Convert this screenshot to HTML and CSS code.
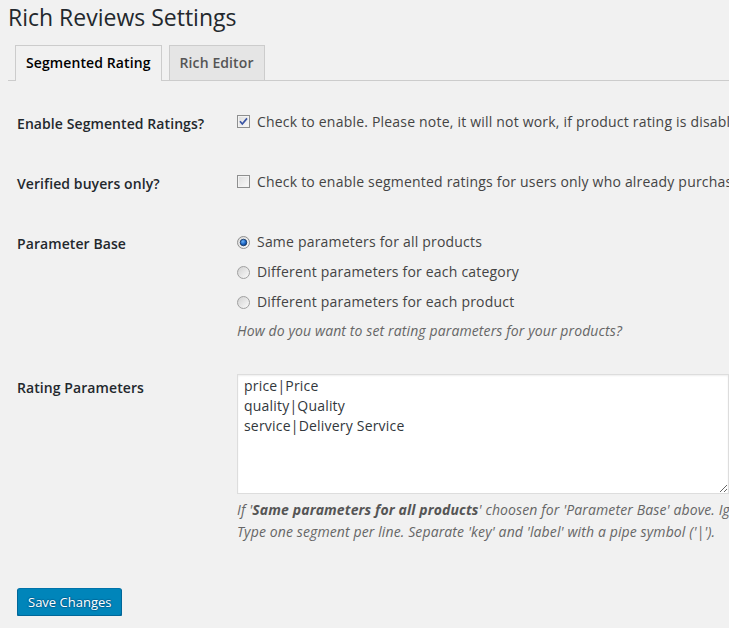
FILE: index.html
```html
<!DOCTYPE html>
<html lang="en">
<head>
<meta charset="utf-8">
<title>Rich Reviews Settings</title>
<link rel="stylesheet" href="styles.css">
</head>
<body>
<div class="wrap">
  <h1 class="page-title">Rich Reviews Settings</h1>
  <nav class="tab-wrapper">
    <a class="tab tab-active">Segmented Rating</a>
    <a class="tab">Rich Editor</a>
  </nav>
  <form class="settings">
    <div class="form-table">
      <div class="row row-1">
        <div class="th">Enable Segmented Ratings?</div>
        <div class="td">
          <label class="check-line">
            <svg class="box" width="13" height="13" viewBox="0 0 13 13">
              <defs><linearGradient id="cg1" x1="0" y1="0" x2="1" y2="1"><stop offset="0" stop-color="#dcdcdc"/><stop offset="1" stop-color="#fbfbfb"/></linearGradient></defs>
              <rect x="0.5" y="0.5" width="12" height="12" fill="url(#cg1)" stroke="#8e8f8f"/>
              <rect x="1.5" y="1.5" width="10" height="10" fill="none" stroke="#f3f3f3"/>
              <path d="M3 6.3 L5.3 9 L10 3.4" fill="none" stroke="#3a55a5" stroke-width="1.7"/>
            </svg>
            <span>Check to enable. Please note, it will not work, if product rating is disabled in WooCommerce settings.</span>
          </label>
        </div>
      </div>
      <div class="row row-2">
        <div class="th">Verified buyers only?</div>
        <div class="td">
          <label class="check-line">
            <svg class="box" width="13" height="13" viewBox="0 0 13 13">
              <defs><linearGradient id="cg2" x1="0" y1="0" x2="1" y2="1"><stop offset="0" stop-color="#dcdcdc"/><stop offset="1" stop-color="#fbfbfb"/></linearGradient></defs>
              <rect x="0.5" y="0.5" width="12" height="12" fill="url(#cg2)" stroke="#8e8f8f"/>
              <rect x="1.5" y="1.5" width="10" height="10" fill="none" stroke="#f3f3f3"/>
            </svg>
            <span>Check to enable segmented ratings for users only who already purchased the product.</span>
          </label>
        </div>
      </div>
      <div class="row row-3">
        <div class="th">Parameter Base</div>
        <div class="td">
          <label class="radio-line">
            <svg class="radio" width="13" height="13" viewBox="0 0 13 13">
              <defs>
                <linearGradient id="rg1" x1="0" y1="0" x2="1" y2="1"><stop offset="0" stop-color="#d8d8d8"/><stop offset="1" stop-color="#fcfcfc"/></linearGradient>
                <radialGradient id="rd1" cx="0.4" cy="0.35" r="0.7"><stop offset="0" stop-color="#6fb3f5"/><stop offset="0.6" stop-color="#1b64c4"/><stop offset="1" stop-color="#0d3a78"/></radialGradient>
              </defs>
              <circle cx="6.5" cy="6.5" r="6" fill="url(#rg1)" stroke="#8f8f8f"/>
              <circle cx="6.5" cy="6.5" r="3.3" fill="url(#rd1)" stroke="#13335f" stroke-width="0.8"/>
            </svg>
            <span>Same parameters for all products</span>
          </label>
          <label class="radio-line">
            <svg class="radio" width="13" height="13" viewBox="0 0 13 13">
              <defs><linearGradient id="rg2" x1="0" y1="0" x2="1" y2="1"><stop offset="0" stop-color="#d0d0d0"/><stop offset="1" stop-color="#fcfcfc"/></linearGradient></defs>
              <circle cx="6.5" cy="6.5" r="6" fill="url(#rg2)" stroke="#a0a0a0"/>
            </svg>
            <span>Different parameters for each category</span>
          </label>
          <label class="radio-line">
            <svg class="radio" width="13" height="13" viewBox="0 0 13 13">
              <defs><linearGradient id="rg3" x1="0" y1="0" x2="1" y2="1"><stop offset="0" stop-color="#d0d0d0"/><stop offset="1" stop-color="#fcfcfc"/></linearGradient></defs>
              <circle cx="6.5" cy="6.5" r="6" fill="url(#rg3)" stroke="#a0a0a0"/>
            </svg>
            <span>Different parameters for each product</span>
          </label>
          <p class="description desc-radio">How do you want to set rating parameters for your products?</p>
        </div>
      </div>
      <div class="row row-4">
        <div class="th">Rating Parameters</div>
        <div class="td">
          <textarea class="params" rows="6">price|Price
quality|Quality
service|Delivery Service</textarea>
          <p class="description desc-area">If '<strong>Same parameters for all products</strong>' choosen for 'Parameter Base' above. Ignored otherwise.<br>Type one segment per line. Separate 'key' and 'label' with a pipe symbol ('|').</p>
        </div>
      </div>
    </div>
    <p class="submit"><button type="button" class="button-primary">Save Changes</button></p>
  </form>
</div>
</body>
</html>
```

FILE: styles.css
```css
html, body {
  margin: 0;
  padding: 0;
  background: #f1f1f1;
  overflow: hidden;
}

body {
  font-family: "Open Sans", "Liberation Sans", sans-serif;
  font-size: 13px;
  color: #444;
}

.wrap {
  padding: 0 0 0 8px;
  width: 1000px;
}

.page-title {
  margin: 0;
  padding: 3px 0 4px;
  font-size: 23px;
  line-height: 29px;
  font-weight: 400;
  color: #23282d;
}

.tab-wrapper {
  display: flex;
  padding-top: 9px;
  border-bottom: 1px solid #ccc;
  height: 35px;
  box-sizing: content-box;
}

.tab {
  display: block;
  margin-left: 7px;
  padding: 5px 10px;
  font-size: 14px;
  line-height: 24px;
  font-weight: 600;
  letter-spacing: 0.1px;
  color: #555;
  background: #e5e5e5;
  border: 1px solid #ccc;
  border-bottom: none;
  height: 24px;
}

.tab-active {
  background: #f1f1f1;
  color: #000;
  position: relative;
  margin-bottom: -1px;
  height: 25px;
}

.form-table {
  padding: 14px 0 0 9px;
}

.row {
  display: grid;
  grid-template-columns: 210px 1fr;
  box-sizing: border-box;
}

.row-1, .row-2 { height: 60px; }
.row-3 { height: 144px; }

.th {
  padding: 20px 10px 0 0;
  font-size: 14px;
  line-height: 18px;
  font-weight: 600;
  letter-spacing: 0.08px;
  color: #23282d;
}

.td {
  padding: 15px 10px 15px 10px;
  font-size: 14px;
  line-height: 24px;
  letter-spacing: 0.2px;
  color: #444;
}

.check-line, .radio-line {
  display: flex;
  align-items: center;
  white-space: nowrap;
  height: 24px;
}

.radio-line {
  margin-bottom: 6px;
}

.box {
  flex: none;
  margin: -1px 7px 0 0;
}

.radio {
  flex: none;
  margin: 0 7px 0 0;
}

.description {
  margin: 0;
  font-size: 14px;
  font-style: italic;
  letter-spacing: 0.12px;
  color: #666;
  line-height: 22px;
  white-space: nowrap;
}

.desc-radio {
  margin-top: 5px;
}

.description strong {
  font-weight: 700;
  color: #555;
}

.params {
  display: block;
  width: 492px;
  height: 120px;
  box-sizing: border-box;
  margin: 0;
  padding: 1px 6px;
  border: 1px solid #ddd;
  box-shadow: inset 0 1px 2px rgba(0,0,0,0.07);
  background: #fff;
  font-family: "Open Sans", "Liberation Sans", sans-serif;
  font-size: 14px;
  line-height: 20px;
  letter-spacing: 0.2px;
  color: #32373c;
  resize: both;
}

.desc-area {
  margin-top: 5px;
}

.submit {
  margin: 0;
  padding: 30px 0 0 9px;
}

.button-primary {
  display: block;
  height: 28px;
  box-sizing: border-box;
  padding: 0 10px 1px;
  font-family: "Open Sans", "Liberation Sans", sans-serif;
  font-size: 13px;
  line-height: 26px;
  color: #fff;
  background: #0085ba;
  border: 1px solid;
  border-color: #0073aa #006799 #006799;
  border-radius: 3px;
  box-shadow: 0 1px 0 #006799;
  text-shadow: 0 -1px 1px #006799, 1px 0 1px #006799, 0 1px 1px #006799, -1px 0 1px #006799;
  cursor: pointer;
}
```
